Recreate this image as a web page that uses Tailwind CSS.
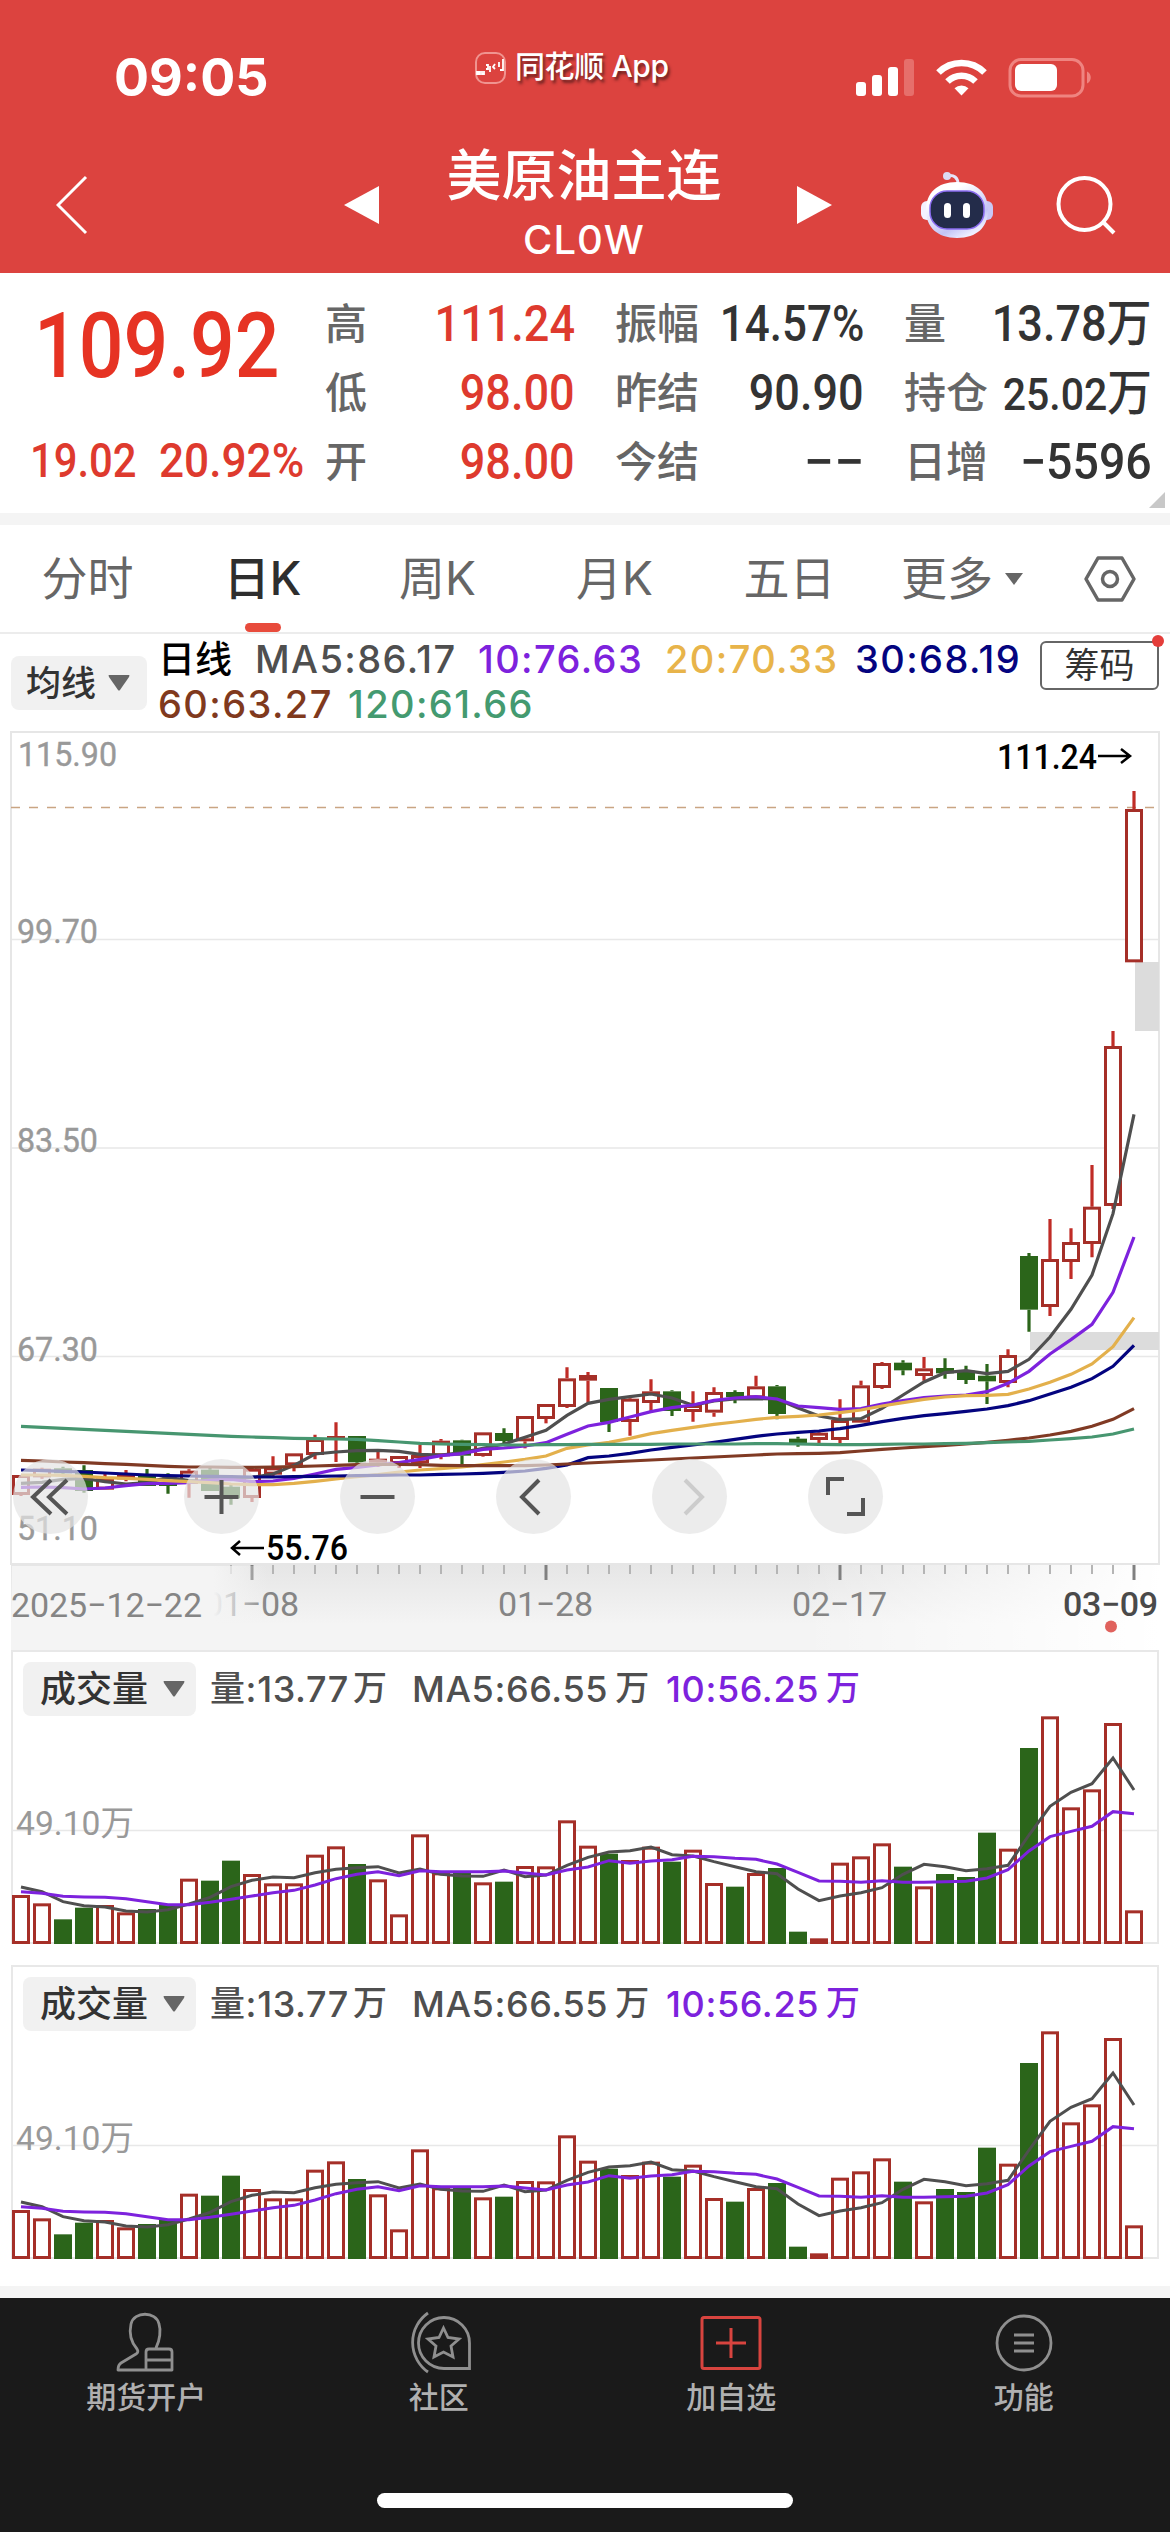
<!DOCTYPE html>
<html lang="zh-CN">

<head>
    <meta charset="UTF-8">
    <meta name="viewport" content="width=device-width, initial-scale=1.0">
    <title>美原油主连 CL0W</title>
    <script src="https://cdn.jsdelivr.net/npm/@tailwindcss/browser@4"></script>
</head>

<body class="w-[1170px] h-[2532px] bg-white overflow-hidden font-[Inter,'Noto_Sans_CJK_SC',sans-serif] flex flex-col">
    <header class="h-[273px] bg-[#dc433f] text-white shrink-0">
        <div class="h-[137px] flex items-start">
            <div class="w-[475px] pl-[114px] pt-[46px] text-[52px] leading-[64px] font-bold">09:05</div>
            <div class="flex items-center gap-[8px] pt-[44px] w-[380px]">
                <svg class="w-8 h-8 mt-1" viewBox="0 0 32 32" fill="none">
                    <rect x="1" y="1" width="29" height="30" rx="9" stroke="#f09490" stroke-width="2" />
                    <path d="M2 20h3v2H2zM7 19v3h2v-3M11 13h2v4h-2M15 14v6M20 12l-2 3 2 2M24 10v5M28 7v11h-3" stroke="#fff" stroke-width="1.800" />
                </svg>
                <span class="text-[30px] leading-[44px] font-medium tracking-[-0.4px] [text-shadow:2px_3px_3px_rgba(60,20,20,0.7)]">同花顺 App</span>
            </div>
            <svg class="w-[240px] h-[50px] mt-[54px]" viewBox="855 54 240 50" fill="none">
                <rect x="856" y="82" width="10" height="14" rx="3" fill="#fff" />
                <rect x="872" y="75" width="10" height="21" rx="3" fill="#fff" />
                <rect x="888" y="67" width="10" height="29" rx="3" fill="#fff" />
                <rect x="904" y="59" width="10" height="37" rx="3" fill="#e66f6b" />
                <path d="M961.500 95.500L954.500 88.200A10.500 10.500 0 0 1 968.500 88.200Z" fill="#fff" />
                <path d="M947.500 81.500a20 20 0 0 1 28 0M938.500 72.500a32.500 32.500 0 0 1 46 0" stroke="#fff" stroke-width="6.500" />
                <rect x="1010" y="59.500" width="73" height="36.500" rx="11" stroke="#ef8480" stroke-width="3" />
                <rect x="1015" y="64" width="42" height="27" rx="6" fill="#fff" />
                <path d="M1087 71.500c5 2 5 10 0 12z" fill="#ef8480" />
            </svg>
        </div>
        <div class="h-[136px] flex items-center">
            <svg class="w-8 h-[60px] ml-14" viewBox="0 0 32 60" fill="none" stroke="#fff" stroke-width="3">
                <path d="M30 2L2 30l28 28" />
            </svg>
            <svg class="w-[35px] h-[38px] ml-[256px]" viewBox="0 0 35 38" fill="#fff">
                <path d="M35 0v38L0 19z" />
            </svg>
            <div class="w-[418px] pr-2 flex flex-col items-center">
                <h1 class="text-[55px] leading-[70px] font-medium">美原油主连</h1>
                <span class="text-[40px] leading-[60px] font-medium tracking-[1px]">CL0W</span>
            </div>
            <svg class="w-[35px] h-[38px]" viewBox="0 0 35 38" fill="#fff">
                <path d="M0 0v38l35-19z" />
            </svg>
            <svg class="w-[74px] h-[68px] ml-[88px]" viewBox="0 0 74 68" fill="none">
                <defs>
                    <linearGradient id="shell" x1="0" y1="0" x2="0.6" y2="1">
                        <stop offset="0.3" stop-color="#fff" />
                        <stop offset="0.8" stop-color="#c3c4f5" />
                        <stop offset="1" stop-color="#eef" />
                    </linearGradient>
                </defs>
                <path d="M27 5c7-2 11 2 11 8" stroke="#e6e4fa" stroke-width="3" />
                <circle cx="27" cy="5" r="4" fill="#dcdcf4" />
                <rect x="1" y="30" width="14" height="19" rx="6" fill="#f4f2ff" />
                <rect x="59" y="30" width="14" height="19" rx="6" fill="#c9c8f5" />
                <path d="M37 11c20 0 31 11 31 28S57 67 37 67 6 56 6 39s11-28 31-28z" fill="url(#shell)" />
                <rect x="10" y="20" width="54" height="38" rx="17" fill="#232c4a" stroke="#8a6cf0" stroke-width="1.500" />
                <rect x="24" y="32" width="7" height="15" rx="3.500" fill="#fff" />
                <rect x="43" y="32" width="7" height="15" rx="3.500" fill="#fff" />
            </svg>
            <svg class="w-[60px] h-[60px] ml-[62px]" viewBox="0 0 60 60" fill="none" stroke="#fff" stroke-width="4">
                <circle cx="28.500" cy="29" r="26" />
                <path d="M47 47l11 11" />
            </svg>
        </div>
    </header>

    <section class="h-[240px] flex pt-[17px] relative shrink-0 font-[Roboto,'Noto_Sans_CJK_SC',sans-serif]">
        <div class="w-[325px] text-[#e63323]">
            <div class="h-[112px] flex items-center pl-[34px]">
                <span class="text-[91px] leading-none font-medium origin-left scale-x-[0.865]">109.92</span>
            </div>
            <div class="h-[88px] flex items-center pt-[30px] text-[48px] pl-[30px] text-[#de3a2e] font-medium">
                <span class="w-[129px] origin-left scale-x-[0.87]">19.02</span>
                <span class="origin-left scale-x-[0.92]">20.92%</span>
            </div>
        </div>
        <div class="grid grid-flow-col grid-rows-[69px_69px_69px] grid-cols-[250px_249px_248px] gap-x-10 font-medium text-[50px] leading-[69px] text-[#333]">
            <div class="flex justify-between"><span class="text-[42px] text-[#666]">高</span><span class="text-[#de3a2e] origin-right scale-x-90">111.24</span></div>
            <div class="flex justify-between"><span class="text-[42px] text-[#666]">低</span><span class="text-[#de3a2e] origin-right scale-x-90">98.00</span></div>
            <div class="flex justify-between"><span class="text-[42px] text-[#666]">开</span><span class="text-[#de3a2e] origin-right scale-x-90">98.00</span></div>
            <div class="flex justify-between whitespace-nowrap"><span class="text-[42px] text-[#666]">振幅</span><span class="origin-right scale-x-[0.88]">14.57%</span></div>
            <div class="flex justify-between"><span class="text-[42px] text-[#666]">昨结</span><span class="origin-right scale-x-90">90.90</span></div>
            <div class="flex justify-between"><span class="text-[42px] text-[#666]">今结</span><span class="origin-right scale-x-[1.08]">−−</span></div>
            <div class="flex justify-between"><span class="text-[42px] text-[#666]">量</span><span class="origin-right scale-x-90">13.78万</span></div>
            <div class="flex justify-between"><span class="text-[42px] text-[#666]">持仓</span><span class="origin-right scale-x-[0.91] text-[45px]">25.02<span class="text-[49px]">万</span></span></div>
            <div class="flex justify-between"><span class="text-[42px] text-[#666]">日增</span><span class="origin-right scale-x-[0.93]">−5596</span></div>
        </div>
        <svg class="absolute right-[5px] bottom-[5px] w-4 h-4" viewBox="0 0 16 16"><path d="M16 0v16H0z" fill="#c8c8c8" /></svg>
    </section>
    <div class="h-3 bg-[#f4f4f4] shrink-0"></div>

    <nav class="h-[109px] flex items-center border-b-2 border-[#ececec] text-[46px] text-[#666] shrink-0">
        <div class="w-[175px] text-center">分时</div>
        <div class="w-[175px] text-center relative text-[#2e2e2e] font-medium">日K
            <i class="absolute left-[70px] top-[79px] w-9 h-[9px] rounded-full bg-[#e84b3c]"></i>
        </div>
        <div class="w-[175px] text-center">周K</div>
        <div class="w-[179px] text-center">月K</div>
        <div class="w-[171px] text-center">五日</div>
        <div class="ml-[26px] w-[92px]">更多</div>
        <svg class="w-[18px] h-3 ml-[12px]" viewBox="0 0 18 12"><path d="M0 0h18l-9 12z" fill="#666" /></svg>
        <svg class="w-[54px] h-[48px] ml-[60px]" viewBox="0 0 54 48" fill="none" stroke="#666" stroke-width="3.500">
            <path d="M15 3h24l12 21-12 21H15L3 24z" stroke-linejoin="round" />
            <circle cx="27" cy="24" r="7.500" />
        </svg>
    </nav>

    <div class="h-[97px] flex shrink-0 relative">
        <button class="ml-[11px] mt-[22px] w-[136px] h-[54px] rounded-lg bg-[#f1f1f1] flex items-center pl-[15px] gap-3 text-[35px] font-medium text-[#333]">
            均线
            <svg class="w-[22px] h-4" viewBox="0 0 22 16"><path d="M1 0h20q1 0 0 2l-9 13q-1 1-2 0L1 2q-1-2 0-2z" fill="#666" /></svg>
        </button>
        <div class="ml-[11px] mt-[3px] text-[38px] leading-[45px] font-medium tracking-[1.4px]">
            <div class="flex whitespace-nowrap">
                <span class="w-[97px] text-black text-[37px] tracking-normal">日线</span>
                <span class="w-[223px] text-[#4f4f4f]">MA5:86.17</span>
                <span class="w-[187px] text-[#7d22dd]">10:76.63</span>
                <span class="w-[190px] text-[#e8b44a]">20:70.33</span>
                <span class="text-[#04047f]">30:68.19</span>
            </div>
            <div class="flex whitespace-nowrap">
                <span class="w-[190px] text-[#80391d]">60:63.27</span>
                <span class="text-[#449a70]">120:61.66</span>
            </div>
        </div>
        <button class="absolute right-[11px] top-[7px] w-[119px] h-[49px] rounded-md border-2 border-[#666] text-[35px] leading-[45px] text-[#333] bg-white">筹码
            <i class="absolute -right-[7px] -top-[8px] w-3 h-3 rounded-full bg-[#e43d3a]"></i>
        </button>
    </div>

    <!-- K line chart -->
    <div class="relative h-[919px] shrink-0">
        <svg id="kline" class="w-[1170px] h-[919px] block font-[Roboto,sans-serif]" viewBox="0 731 1170 919">
            <defs>
                <linearGradient id="axisBg" x1="0" y1="0" x2="0" y2="1">
                    <stop offset="0" stop-color="#e6e6e6" />
                    <stop offset="0.7" stop-color="#f4f4f4" />
                </linearGradient>
                <linearGradient id="axisLeft">
                    <stop offset="0.79" stop-color="#f4f4f4" />
                    <stop offset="1" stop-color="#f4f4f4" stop-opacity="0" />
                </linearGradient>
                <linearGradient id="axisRight">
                    <stop offset="0" stop-color="#fff" stop-opacity="0" />
                    <stop offset="1" stop-color="#fff" />
                </linearGradient>
            </defs>
            <rect x="11" y="1565" width="1148" height="85" fill="url(#axisBg)" />
            <rect x="800" y="1565" width="360" height="85" fill="url(#axisRight)" />
            <g id="ticks"></g>
            <g fill="#858585" font-size="34">
                <text x="204" y="1616" textLength="95">01−08</text>
                <text x="498" y="1616" textLength="95">01−28</text>
                <text x="792" y="1616" textLength="95">02−17</text>
                <text x="1063" y="1616" textLength="95" fill="#4a4a4a" class="font-medium">03−09</text>
            </g>
            <rect x="12" y="1566" width="255" height="82" fill="url(#axisLeft)" />
            <text x="11" y="1617" textLength="191" font-size="34" fill="#858585">2025−12−22</text>
            <circle cx="1111" cy="1626.500" r="6" fill="#e0625d" />

            <path d="M11 939.500H1159M11 1148H1159M11 1356.500H1159" stroke="#e8e8e8" stroke-width="1.500" />
            <rect x="11" y="732" width="1148" height="832" fill="none" stroke="#e6e6e6" stroke-width="2" />
            <path d="M11 807.500H1159" stroke="#c9a583" stroke-width="1.500" stroke-dasharray="9 9" />
            <path d="M1135 962h24v69h-24zM1030 1332h129v18h-129z" fill="#dcdcdc" />
            <g fill="#999" font-size="34" stroke="#999" stroke-width="0.400">
                <text x="18" y="766" textLength="99" lengthAdjust="spacingAndGlyphs">115.90</text>
                <text x="17" y="943" textLength="81" lengthAdjust="spacingAndGlyphs">99.70</text>
                <text x="17" y="1152" textLength="81" lengthAdjust="spacingAndGlyphs">83.50</text>
                <text x="17" y="1361" textLength="81" lengthAdjust="spacingAndGlyphs">67.30</text>
                <text x="17" y="1540" textLength="81" lengthAdjust="spacingAndGlyphs">51.10</text>
            </g>
            <g id="candles"></g>
            <g id="maLines" fill="none" stroke-width="3.200"></g>
            <g font-size="35" class="font-medium" fill="#000">
                <text x="997" y="769" textLength="100" lengthAdjust="spacingAndGlyphs">111.24</text>
                <text x="266" y="1560" textLength="82" lengthAdjust="spacingAndGlyphs">55.76</text>
            </g>
            <path d="M1098 756h32M1121 749l9 7-9 7M264 1548h-32M240 1541l-8 7 8 7" fill="none" stroke="#000" stroke-width="2.500" />
        </svg>
        <div class="absolute left-[13px] top-[728px] flex">
            <svg class="w-[75px] h-[75px] mr-[96px] rounded-full bg-[#e4e4e4]/70" viewBox="0 0 75 75" fill="none" stroke="#555" stroke-width="4"><path d="M38 21L20 38l18 17M54 21L36 38l18 17" /></svg>
            <svg class="w-[75px] h-[75px] mr-[81px] rounded-full bg-[#e4e4e4]/70" viewBox="0 0 75 75" fill="none" stroke="#555" stroke-width="4"><path d="M20.500 38h34M37.500 21v34" /></svg>
            <svg class="w-[75px] h-[75px] mr-[81px] rounded-full bg-[#e4e4e4]/70" viewBox="0 0 75 75" fill="none" stroke="#555" stroke-width="4"><path d="M20.500 38h34" /></svg>
            <svg class="w-[75px] h-[75px] mr-[81px] rounded-full bg-[#e4e4e4]/70" viewBox="0 0 75 75" fill="none" stroke="#555" stroke-width="4"><path d="M43 21L26 38l17 17" /></svg>
            <svg class="w-[75px] h-[75px] mr-[81px] rounded-full bg-[#e4e4e4]/70" viewBox="0 0 75 75" fill="none" stroke="#ccc" stroke-width="4"><path d="M33 21l17 17-17 17" /></svg>
            <svg class="w-[75px] h-[75px] rounded-full bg-[#e4e4e4]/70" viewBox="0 0 75 75" fill="none" stroke="#555" stroke-width="4"><path d="M20 36V20h16M55 39v16H39" /></svg>
        </div>
    </div>

    <!-- volume panels -->
    <section class="relative h-[294px] mx-[11px] border-2 border-[#e8e8e8] shrink-0">
        <svg class="volume absolute -left-[2px] -top-[2px] w-[1148px] h-[294px]" viewBox="11 1650 1148 294"></svg>
        <div class="relative flex items-center pt-[10px] pl-[10px] text-[36px] font-medium text-[#4f4f4f] whitespace-nowrap tracking-[0.6px]">
            <button class="w-[173px] h-[54px] rounded-lg bg-[#f1f1f1] flex items-center pl-[17px] gap-[15px] text-[36px] text-[#333] tracking-normal">
                成交量
                <svg class="w-[22px] h-4" viewBox="0 0 22 16"><path d="M1 0h20q1 0 0 2l-9 13q-1 1-2 0L1 2q-1-2 0-2z" fill="#666" /></svg>
            </button>
            <span class="ml-[14px] w-[202px] flex"><span class="text-[35px]">量</span>:13.77<span class="ml-[4px] text-[34px]">万</span></span>
            <span class="w-[254px] flex">MA5:66.55<span class="ml-[7px] text-[34px]">万</span></span>
            <span class="flex text-[#7d22dd]">10:56.25<span class="ml-[7px] text-[34px]">万</span></span>
        </div>
    </section>
    <section class="relative h-[294px] mx-[11px] mt-[21px] border-2 border-[#e8e8e8] shrink-0">
        <svg class="volume absolute -left-[2px] -top-[2px] w-[1148px] h-[294px]" viewBox="11 1650 1148 294"></svg>
        <div class="relative flex items-center pt-[10px] pl-[10px] text-[36px] font-medium text-[#4f4f4f] whitespace-nowrap tracking-[0.6px]">
            <button class="w-[173px] h-[54px] rounded-lg bg-[#f1f1f1] flex items-center pl-[17px] gap-[15px] text-[36px] text-[#333] tracking-normal">
                成交量
                <svg class="w-[22px] h-4" viewBox="0 0 22 16"><path d="M1 0h20q1 0 0 2l-9 13q-1 1-2 0L1 2q-1-2 0-2z" fill="#666" /></svg>
            </button>
            <span class="ml-[14px] w-[202px] flex"><span class="text-[35px]">量</span>:13.77<span class="ml-[4px] text-[34px]">万</span></span>
            <span class="w-[254px] flex">MA5:66.55<span class="ml-[7px] text-[34px]">万</span></span>
            <span class="flex text-[#7d22dd]">10:56.25<span class="ml-[7px] text-[34px]">万</span></span>
        </div>
    </section>

    <div class="h-3 mt-[27px] bg-[#f4f4f4] shrink-0"></div>
    <footer class="flex-1 bg-[#1a1a1a] flex flex-col items-center text-[30px] text-[#b0b0b0]">
        <div class="w-full grid grid-cols-4 pt-[13px] h-[195px]">
            <div class="flex flex-col items-center">
                <svg class="w-[68px] h-[64px]" viewBox="112 2311 68 64" fill="none" stroke="#8f8f8f" stroke-width="2.800" stroke-linejoin="round">
                    <path d="M156 2348c4-8 5-18 3-24-3-13-25-13-28 0-2 9 0 18 6 25q2 3-1 5l-15 9q-3 2-3 7h54v-18q0-3-3-3h-20q-3 0-3 3v18M146 2360h26" />
                </svg>
                <span class="leading-[44px] font-medium">期货开户</span>
            </div>
            <div class="flex flex-col items-center">
                <svg class="w-[68px] h-[64px]" viewBox="405 2311 68 64" fill="none" stroke="#8f8f8f" stroke-width="2.800">
                    <path d="M469.500 2368.500H444a25.500 25.500 0 1 1 25.500-25.500zM428 2313a36 36 0 0 0 0 59" />
                    <path d="M443.500 2328l4.500 9.500 11 1.500-8 7 2 11-9.500-5-9.500 5 2-11-8-7 11-1.500z" />
                </svg>
                <span class="leading-[44px] font-medium">社区</span>
            </div>
            <div class="flex flex-col items-center">
                <svg class="w-[68px] h-[64px]" viewBox="697 2311 68 64" fill="none" stroke="#d8443f" stroke-width="3">
                    <rect x="702" y="2317.500" width="58" height="51" rx="2" />
                    <path d="M716 2343h30M731 2328v30" />
                </svg>
                <span class="leading-[44px] font-medium">加自选</span>
            </div>
            <div class="flex flex-col items-center">
                <svg class="w-[68px] h-[64px]" viewBox="990 2311 68 64" fill="none" stroke="#8f8f8f" stroke-width="2.800">
                    <circle cx="1024" cy="2343" r="27" />
                    <path d="M1014 2335h20M1014 2343h20M1014 2351h20" />
                </svg>
                <span class="leading-[44px] font-medium">功能</span>
            </div>
        </div>
        <div class="w-[416px] h-[15px] rounded-full bg-white"></div>
    </footer>

    <script>
        const RED = '#a52f28', GREEN = '#2b651a';
        const x = i => 21 + i * 21;

        // each candle: high, body top, body bottom, low, up(1)/down(0); unit is 1/3px below y=1340
        const candles = [
            [405, 405, 465, 468, 1], [383, 386, 412, 416, 1], [380, 385, 400, 408, 0], [376, 390, 453, 458, 0],
            [402, 415, 449, 449, 1], [390, 405, 418, 424, 1], [387, 405, 438, 438, 0], [400, 428, 438, 461, 0],
            [388, 392, 432, 473, 1], [383, 389, 453, 453, 0], [435, 440, 475, 494, 0], [383, 386, 474, 486, 1],
            [349, 382, 404, 410, 1], [340, 340, 376, 394, 1], [284, 297, 345, 358, 1], [247, 288, 294, 366, 1],
            [288, 288, 367, 372, 0], [330, 356, 368, 380, 1], [348, 348, 372, 384, 1], [315, 345, 370, 384, 1],
            [297, 302, 349, 358, 1], [299, 301, 347, 372, 0], [277, 277, 348, 350, 1], [265, 279, 303, 310, 0],
            [228, 228, 304, 325, 1], [192, 192, 237, 250, 1], [82, 115, 201, 204, 1], [96, 105, 122, 188, 1],
            [144, 144, 246, 276, 0], [170, 176, 246, 287, 1], [118, 154, 189, 218, 1], [151, 154, 213, 228, 0],
            [154, 195, 216, 245, 1], [142, 156, 218, 230, 1], [151, 156, 172, 190, 0], [107, 139, 175, 178, 1],
            [135, 139, 222, 238, 0], [290, 296, 312, 320, 0], [276, 278, 300, 310, 1], [178, 240, 300, 311, 1],
            [122, 136, 248, 248, 1], [66, 69, 144, 147, 1], [61, 68, 91, 106, 0], [51, 85, 108, 122, 1],
            [55, 84, 100, 116, 0], [77, 92, 120, 132, 0], [72, 107, 124, 192, 0], [28, 45, 129, 142, 1],
            [-261, -252, -91, -25, 0], [-363, -243, -99, -72, 1], [-335, -294, -234, -183, 1], [-525, -400, -288, -248, 1],
            [-927, -882, -402, -393, 1], [-1647, -1593, -1133, -1133, 1]
        ];
        const ky = v => 1340 + v / 3;
        document.getElementById('candles').innerHTML = candles.map(([h, t, b, l, up], i) => {
            const c = up ? RED : GREEN;
            const wick = `<path d="M${x(i)} ${ky(h)}V${ky(t)}M${x(i)} ${ky(b)}V${ky(l)}" stroke="${up ? '#c02c26' : c}" stroke-width="3.2"/>`;
            const H = (b - t) / 3;
            const body = up && H > 6
                ? `<rect x="${x(i) - 7.5}" y="${ky(t) + 1.5}" width="15" height="${H - 3}" fill="#fff" stroke="${c}" stroke-width="3"/>`
                : `<rect x="${x(i) - 9}" y="${ky(t)}" width="18" height="${Math.max(H, 2)}" fill="${c}"/>`;
            return wick + body;
        }).join('');

        const lines = [
            ['#4f4f4f', [460, 430, 427, 418, 415, 425, 432, 428, 412, 422, 425, 415, 412, 402, 376, 342, 336, 332, 331, 334, 343, 345, 338, 325, 312, 292, 271, 226, 190, 178, 170, 162, 174, 196, 183, 177, 176, 177, 204, 228, 239, 236, 205, 165, 126, 98, 92, 101, 94, 58, -9, -92, -195, -379, -677]],
            ['#7d22dd', [442, 441, 443, 447, 444, 437, 431, 430, 428, 420, 418, 425, 423, 415, 402, 388, 382, 375, 368, 358, 347, 341, 328, 324, 318, 308, 283, 258, 247, 231, 215, 203, 195, 181, 174, 170, 177, 198, 203, 208, 206, 192, 182, 173, 168, 165, 155, 130, 94, 42, -1, -47, -143, -309]],
            ['#e3b04c', [405, 405, 406, 409, 413, 415, 418, 422, 425, 428, 432, 434, 434, 430, 424, 417, 410, 404, 396, 390, 386, 381, 374, 366, 358, 348, 325, 315, 307, 295, 281, 271, 262, 253, 246, 238, 232, 229, 225, 218, 210, 198, 188, 178, 171, 167, 166, 163, 147, 127, 103, 72, 20, -67]],
            ['#04047f', [390, 392, 394, 396, 399, 402, 405, 407, 408, 409, 410, 411, 411, 410, 409, 408, 407, 406, 405, 405, 403, 402, 400, 397, 393, 385, 375, 353, 348, 340, 330, 322, 315, 307, 298, 289, 282, 277, 273, 266, 256, 245, 235, 227, 221, 214, 207, 197, 182, 162, 142, 116, 79, 16]],
            ['#803a24', [361, 363, 366, 368, 371, 373, 376, 379, 381, 381, 382, 382, 381, 380, 378, 376, 374, 373, 373, 374, 376, 377, 377, 377, 377, 375, 372, 369, 366, 363, 360, 357, 354, 351, 348, 345, 342, 341, 340, 338, 333, 328, 324, 320, 316, 312, 307, 301, 294, 285, 274, 259, 238, 206]],
            ['#479670', [259, 262, 265, 268, 271, 274, 277, 280, 283, 286, 289, 291, 293, 295, 296, 297, 298, 302, 306, 310, 312, 313, 314, 315, 315, 314, 314, 313, 313, 313, 313, 312, 312, 312, 312, 311, 311, 312, 313, 314, 314, 313, 312, 312, 311, 310, 308, 306, 304, 300, 296, 291, 282, 267]]
        ];
        // right-align every series to the last candle
        document.getElementById('maLines').innerHTML = lines.map(([c, ys]) =>
            `<polyline stroke="${c}" points="${ys.slice(-54).map((v, i) => x(i) + ',' + ky(v)).join(' ')}"/>`).join('');

        let ticks = '';
        for (let i = 10; i <= 53; i++) {
            const major = (i - 11) % 14 === 0;
            ticks += `<path d="M${x(i)} 1565v${major ? 15 : 9}" stroke="${major ? '#808080' : '#b5b5b5'}" stroke-width="${major ? 3 : 2}"/>`;
        }
        document.getElementById('ticks').innerHTML = ticks;

        // volume bar tops in 1/3px below y=1630, negative = falling day
        const vols = [795, 820, -868, -833, 825, 847, -837, -824, 746, -752, -692, 732, 760, 760, 674, 649, -702, 748, 853, 613, 727, -727, 757, -755, 708, 709, 571, 647, -671, 690, 650, -695, 659, 759, -770, 729, -714, -905, 925, 698, 679, 640, -710, 769, -732, -741, -608, 656, -354, 259, 532, 478, 279, 841];
        const v5 = [771, 785, 815, 827, 831, 843, 846, 839, 822, 802, 770, 751, 741, 743, 728, 718, 713, 710, 729, 717, 733, 738, 739, 720, 740, 735, 706, 682, 666, 662, 651, 674, 678, 695, 710, 725, 731, 777, 812, 798, 788, 773, 733, 703, 710, 722, 716, 706, 615, 529, 487, 461, 384, 480];
        const v10 = [785, 790, 799, 801, 802, 806, 815, 824, 824, 817, 808, 798, 788, 781, 765, 746, 733, 725, 737, 722, 725, 725, 725, 723, 729, 735, 720, 711, 692, 700, 693, 689, 679, 680, 685, 688, 702, 727, 753, 754, 757, 752, 757, 757, 755, 754, 744, 719, 663, 620, 604, 589, 545, 551];
        const vy = v => 1630 + v / 3;
        const poly = (ys, c) => `<polyline fill="none" stroke="${c}" stroke-width="3" points="${ys.map((v, i) => x(i) + ',' + vy(v)).join(' ')}"/>`;
        const volSvg = '<path d="M11 1830.500H1159" stroke="#e8e8e8" stroke-width="1.500"/>' +
            '<text x="16" y="1835" font-size="34" fill="#999" font-family="Roboto, Noto Sans CJK SC" textLength="118" lengthAdjust="spacingAndGlyphs">49.10万</text>' +
            vols.map((v, i) => {
                const top = vy(Math.abs(v)), h = 1944 - top;
                return v < 0
                    ? `<rect x="${x(i) - 9}" y="${top}" width="18" height="${h}" fill="${GREEN}"/>`
                    : `<rect x="${x(i) - 7.5}" y="${top + 1.5}" width="15" height="${h - 3}" fill="#fff" stroke="${RED}" stroke-width="3"/>`;
            }).join('') + poly(v5, '#4f4f4f') + poly(v10, '#7d22dd');
        document.querySelectorAll('.volume').forEach(el => el.innerHTML = volSvg);
    </script>
</body>

</html>
